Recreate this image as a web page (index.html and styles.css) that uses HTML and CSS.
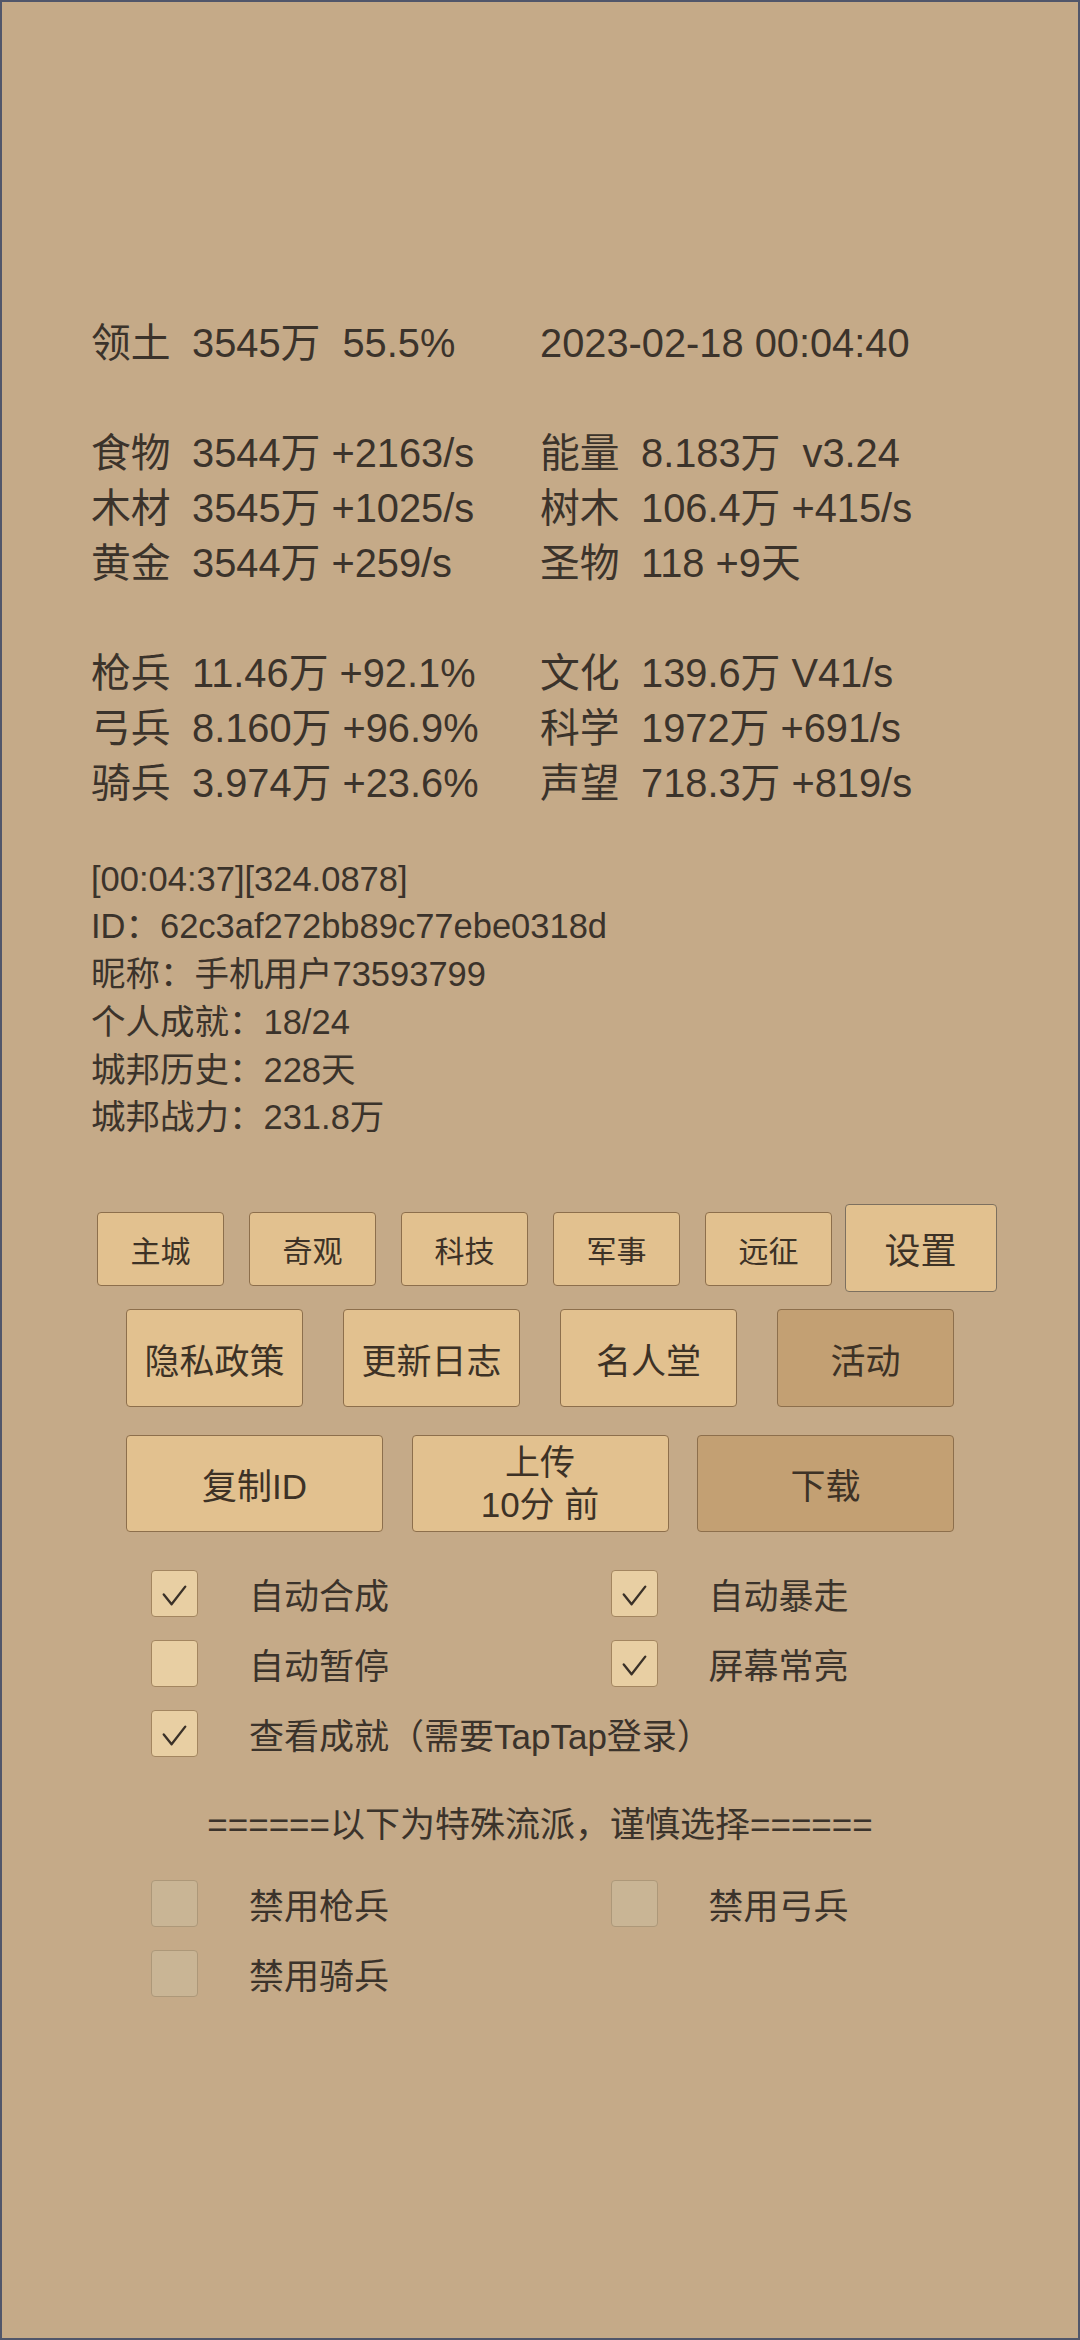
FILE: index.html
```html
<!DOCTYPE html>
<html lang="zh-CN">
<head>
<meta charset="utf-8">
<title>城邦</title>
<link rel="stylesheet" href="styles.css">
</head>
<body>
<div class="screen">
  <div class="stats">
    <div class="ln"><span class="k">领土</span><span class="v">3545万  55.5%</span></div>
    <div class="ln"><span class="v">2023-02-18 00:04:40</span></div>
    <div class="ln"></div><div class="ln"></div>
    <div class="ln"><span class="k">食物</span><span class="v">3544万 +2163/s</span></div>
    <div class="ln"><span class="k">能量</span><span class="v">8.183万  v3.24</span></div>
    <div class="ln"><span class="k">木材</span><span class="v">3545万 +1025/s</span></div>
    <div class="ln"><span class="k">树木</span><span class="v">106.4万 +415/s</span></div>
    <div class="ln"><span class="k">黄金</span><span class="v">3544万 +259/s</span></div>
    <div class="ln"><span class="k">圣物</span><span class="v">118 +9天</span></div>
    <div class="ln"></div><div class="ln"></div>
    <div class="ln"><span class="k">枪兵</span><span class="v">11.46万 +92.1%</span></div>
    <div class="ln"><span class="k">文化</span><span class="v">139.6万 V41/s</span></div>
    <div class="ln"><span class="k">弓兵</span><span class="v">8.160万 +96.9%</span></div>
    <div class="ln"><span class="k">科学</span><span class="v">1972万 +691/s</span></div>
    <div class="ln"><span class="k">骑兵</span><span class="v">3.974万 +23.6%</span></div>
    <div class="ln"><span class="k">声望</span><span class="v">718.3万 +819/s</span></div>
  </div>

  <div class="info">
    <div>[00:04:37][324.0878]</div>
    <div>ID：62c3af272bb89c77ebe0318d</div>
    <div>昵称：手机用户73593799</div>
    <div>个人成就：18/24</div>
    <div>城邦历史：228天</div>
    <div>城邦战力：231.8万</div>
  </div>

  <div class="row1">
    <div class="cell"><div class="btn">主城</div></div>
    <div class="cell"><div class="btn">奇观</div></div>
    <div class="cell"><div class="btn">科技</div></div>
    <div class="cell"><div class="btn">军事</div></div>
    <div class="cell"><div class="btn">远征</div></div>
    <div class="cell big"><div class="btn big">设置</div></div>
  </div>

  <div class="row2">
    <div class="btn">隐私政策</div>
    <div class="btn">更新日志</div>
    <div class="btn">名人堂</div>
    <div class="btn dark">活动</div>
  </div>

  <div class="row3">
    <div class="btn">复制ID</div>
    <div class="btn two">上传<br>10分 前</div>
    <div class="btn dark">下载</div>
  </div>

  <div class="checks">
    <div class="chk"><span class="box"><svg viewBox="0 0 46 46"><polyline points="12,24 20,34 34,16"/></svg></span><span>自动合成</span></div>
    <div class="chk"><span class="box"><svg viewBox="0 0 46 46"><polyline points="12,24 20,34 34,16"/></svg></span><span>自动暴走</span></div>
    <div class="chk"><span class="box"></span><span>自动暂停</span></div>
    <div class="chk"><span class="box"><svg viewBox="0 0 46 46"><polyline points="12,24 20,34 34,16"/></svg></span><span>屏幕常亮</span></div>
    <div class="chk wide"><span class="box"><svg viewBox="0 0 46 46"><polyline points="12,24 20,34 34,16"/></svg></span><span>查看成就（需要TapTap登录）</span></div>
  </div>

  <div class="sep">======以下为特殊流派，谨慎选择======</div>

  <div class="checks off">
    <div class="chk"><span class="box"></span><span>禁用枪兵</span></div>
    <div class="chk"><span class="box"></span><span>禁用弓兵</span></div>
    <div class="chk"><span class="box"></span><span>禁用骑兵</span></div>
  </div>
</div>
</body>
</html>
```

FILE: styles.css
```css
html, body {
  margin: 0;
  padding: 0;
  background: #c5aa88;
}

.screen {
  width: 1080px;
  height: 2340px;
  box-sizing: border-box;
  border: 2px solid #51566a;
  background: #c5aa88;
  color: #3b332b;
  font-family: "Liberation Sans", "Noto Sans CJK SC", sans-serif;
  padding-top: 313.5px;
  overflow: hidden;
}

.stats {
  display: grid;
  grid-template-columns: 449px 1fr;
  padding-left: 89px;
  font-size: 39.8px;
  line-height: 55px;
}

.ln {
  height: 55px;
  white-space: pre;
}

.k {
  display: inline-block;
  width: 101px;
}

.info {
  margin-top: 45px;
  padding-left: 89px;
  font-size: 34.5px;
  line-height: 47.8px;
}

.btn {
  display: flex;
  align-items: center;
  justify-content: center;
  box-sizing: border-box;
  background: #e2c18f;
  border: 1.5px solid #8d6f4c;
  border-radius: 4px;
  color: #3d3226;
  text-align: center;
}

.btn.dark {
  background: #c3a073;
}

.row1 {
  margin-top: 62px;
  display: flex;
  padding-left: 82.5px;
}

.cell {
  width: 152px;
  height: 88px;
  box-sizing: border-box;
  padding: 8px 12.5px 6px;
}

.cell .btn {
  width: 100%;
  height: 100%;
  font-size: 30px;
}

.cell.big {
  padding: 0;
}

.cell .btn.big {
  font-size: 36px;
  border-color: #7d705f;
}

.row2 {
  margin-top: 17px;
  display: flex;
  gap: 40px;
  padding-left: 124px;
}

.row2 .btn {
  width: 177px;
  height: 98px;
  font-size: 35px;
}

.row3 {
  margin-top: 28px;
  display: flex;
  gap: 28.5px;
  padding-left: 124px;
}

.row3 .btn {
  width: 257px;
  height: 97px;
  font-size: 35px;
}

.row3 .btn.two {
  line-height: 42px;
}

.checks {
  margin-top: 38px;
  display: grid;
  grid-template-columns: 459.5px 1fr;
  row-gap: 23px;
  padding-left: 149px;
  font-size: 35px;
}

.chk {
  display: flex;
  align-items: center;
  height: 47px;
  white-space: nowrap;
}

.chk.wide {
  grid-column: 1 / -1;
}

.box {
  flex: none;
  width: 47px;
  height: 47px;
  box-sizing: border-box;
  border: 1.5px solid #a38660;
  border-radius: 4px;
  background: #e8cfa3;
  margin-right: 51px;
  display: flex;
}

.box svg {
  width: 100%;
  height: 100%;
}

.box polyline {
  fill: none;
  stroke: #3a3128;
  stroke-width: 2.4;
  stroke-linecap: round;
  stroke-linejoin: round;
}

.sep {
  margin-top: 43px;
  text-align: center;
  font-size: 35px;
  line-height: 50px;
}

.checks.off {
  margin-top: 30px;
}

.checks.off .box {
  background: #c9b595;
  border-color: #ad9879;
}
```
